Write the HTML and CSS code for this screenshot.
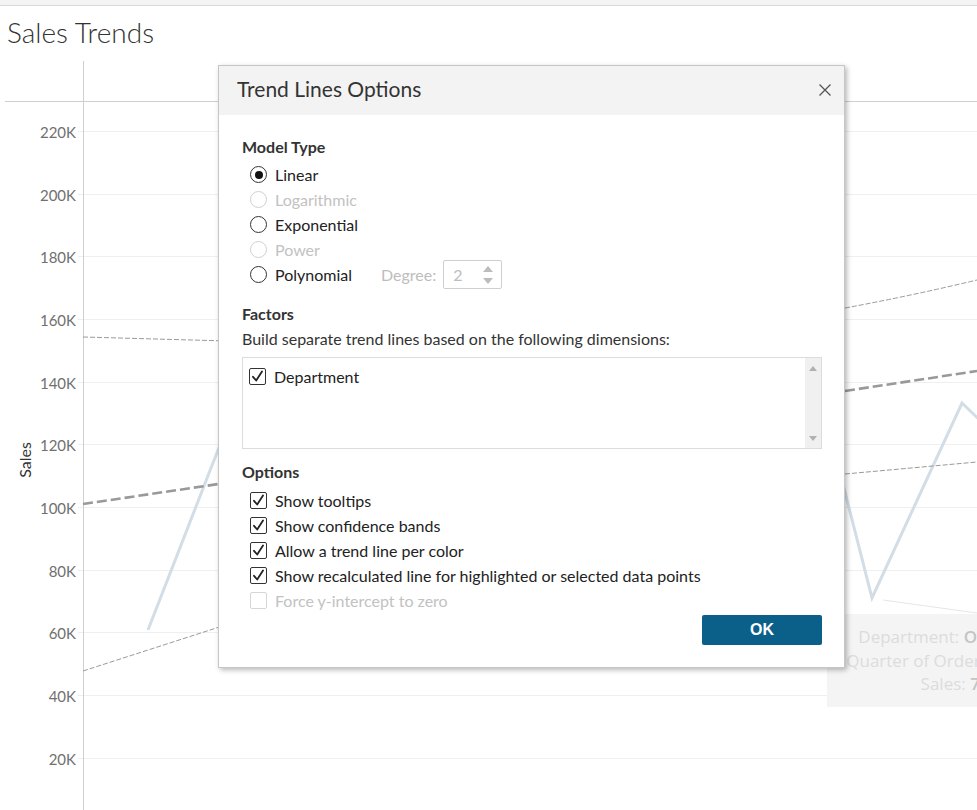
FILE: index.html
```html
<!DOCTYPE html>
<html>
<head>
<meta charset="utf-8">
<title>Sales Trends</title>
<link rel="stylesheet" href="styles.css">
</head>
<body>
<div class="page">
  <div class="topbar"></div>
  <h1 class="title">Sales Trends</h1>
  <div class="chart">
    <svg class="chart-svg" width="977" height="749" viewBox="0 61 977 749">
      <line class="sep" x1="5" y1="101.5" x2="977" y2="101.5"/>
      <g class="grid">
        <line x1="78" y1="131.5" x2="977" y2="131.5"/>
        <line x1="78" y1="194.5" x2="977" y2="194.5"/>
        <line x1="78" y1="256.5" x2="977" y2="256.5"/>
        <line x1="78" y1="319.5" x2="977" y2="319.5"/>
        <line x1="78" y1="382.5" x2="977" y2="382.5"/>
        <line x1="78" y1="444.5" x2="977" y2="444.5"/>
        <line x1="78" y1="507.5" x2="977" y2="507.5"/>
        <line x1="78" y1="570.5" x2="977" y2="570.5"/>
        <line x1="78" y1="632.5" x2="977" y2="632.5"/>
        <line x1="78" y1="695.5" x2="977" y2="695.5"/>
        <line x1="78" y1="758.5" x2="977" y2="758.5"/>
      </g>
      <line class="axis" x1="83.5" y1="61" x2="83.5" y2="810"/>
      <g class="ticks">
        <text x="76" y="132">220K</text>
        <text x="76" y="195">200K</text>
        <text x="76" y="257">180K</text>
        <text x="76" y="320">160K</text>
        <text x="76" y="383">140K</text>
        <text x="76" y="445">120K</text>
        <text x="76" y="508">100K</text>
        <text x="76" y="571">80K</text>
        <text x="76" y="633">60K</text>
        <text x="76" y="696">40K</text>
        <text x="76" y="759">20K</text>
        <text x="76" y="816">0K</text>
      </g>
      <text class="axis-title" transform="translate(24 460) rotate(-90)">Sales</text>

      <polyline class="series" points="148,630 218,450 300,260"/>
      <polyline class="series" points="820,400 845,492 872,598 962,403 990,430"/>
      <line class="faint" x1="883" y1="600" x2="977" y2="613"/>

      <line class="trend-thin" x1="83" y1="337" x2="300" y2="343"/>
      <path class="trend-thin" d="M845 308 Q910 296 977 280"/>
      <line class="trend-thick" x1="83" y1="504" x2="300" y2="472"/>
      <line class="trend-thick" x1="845" y1="391" x2="977" y2="371"/>
      <line class="trend-thin" x1="83" y1="671" x2="300" y2="601"/>
      <line class="trend-thin" x1="845" y1="474" x2="977" y2="462"/>
    </svg>
    <div class="tooltip">
      <div class="tip-inner">
        <div>Department: <b>Office Supplies</b></div>
        <div>Quarter of Order Date: <b>2013 Q2</b></div>
        <div>Sales: <b>71,208</b></div>
      </div>
    </div>
  </div>

  <div class="dialog">
    <div class="dialog-head">
      <span class="dialog-title">Trend Lines Options</span>
      <svg class="close" width="12" height="12" viewBox="0 0 12 12"><path d="M0.5 0.5 L11.5 11.5 M11.5 0.5 L0.5 11.5"/></svg>
    </div>
    <div class="dialog-body">
      <div class="section-title">Model Type</div>
      <div class="radio-list">
        <div class="row"><span class="radio checked"></span><span>Linear</span></div>
        <div class="row disabled"><span class="radio"></span><span>Logarithmic</span></div>
        <div class="row"><span class="radio"></span><span>Exponential</span></div>
        <div class="row disabled"><span class="radio"></span><span>Power</span></div>
        <div class="row">
          <span class="radio"></span><span>Polynomial</span>
          <span class="degree-label">Degree:</span>
          <span class="spin">
            <span class="spin-value">2</span>
            <span class="spin-arrows">
              <svg width="10" height="6" viewBox="0 0 10 6"><path d="M5 0 L10 6 L0 6 Z"/></svg>
              <svg width="10" height="6" viewBox="0 0 10 6"><path d="M0 0 L10 0 L5 6 Z"/></svg>
            </span>
          </span>
        </div>
      </div>

      <div class="section-title factors">Factors</div>
      <div class="desc">Build separate trend lines based on the following dimensions:</div>
      <div class="listbox">
        <div class="list-items">
          <div class="row"><span class="check on"><svg width="15" height="15" viewBox="0 0 15 15"><path d="M3 7.8 L6.2 11.5 L12 2.5"/></svg></span><span>Department</span></div>
        </div>
        <div class="scrollbar">
          <svg width="8" height="5" viewBox="0 0 8 5"><path d="M4 0 L8 5 L0 5 Z"/></svg>
          <svg width="8" height="5" viewBox="0 0 8 5"><path d="M0 0 L8 0 L4 5 Z"/></svg>
        </div>
      </div>

      <div class="section-title options">Options</div>
      <div class="check-list">
        <div class="row"><span class="check on"><svg width="15" height="15" viewBox="0 0 15 15"><path d="M3 7.8 L6.2 11.5 L12 2.5"/></svg></span><span>Show tooltips</span></div>
        <div class="row"><span class="check on"><svg width="15" height="15" viewBox="0 0 15 15"><path d="M3 7.8 L6.2 11.5 L12 2.5"/></svg></span><span>Show confidence bands</span></div>
        <div class="row"><span class="check on"><svg width="15" height="15" viewBox="0 0 15 15"><path d="M3 7.8 L6.2 11.5 L12 2.5"/></svg></span><span>Allow a trend line per color</span></div>
        <div class="row"><span class="check on"><svg width="15" height="15" viewBox="0 0 15 15"><path d="M3 7.8 L6.2 11.5 L12 2.5"/></svg></span><span>Show recalculated line for highlighted or selected data points</span></div>
        <div class="row disabled"><span class="check"></span><span>Force y-intercept to zero</span></div>
      </div>

      <div class="footer">
        <button class="ok">OK</button>
      </div>
    </div>
  </div>
</div>
</body>
</html>
```

FILE: styles.css
```css
* { box-sizing: border-box; }
html, body { margin: 0; padding: 0; background: #fff; overflow: hidden; }
body { font-family: "Lato", "Liberation Sans", sans-serif; color: #333; }

.page { position: relative; width: 977px; height: 810px; overflow: hidden; }

.topbar { height: 6px; background: #f4f4f4; border-bottom: 1px solid #dadada; }

.title {
  margin: 0;
  height: 55px;
  padding: 10px 0 0 7px;
  font-size: 28px;
  font-weight: 300;
  line-height: 1.2;
  color: #333;
}

.chart { position: relative; height: 749px; }
.chart-svg { display: block; }
.sep { stroke: #cfcfcf; stroke-width: 1; }
.axis { stroke: #cfcfcf; stroke-width: 1; }
.grid line { stroke: #efefef; stroke-width: 1; }
.ticks text { font-family: "Lato", "Liberation Sans", sans-serif; font-size: 15px; fill: #707070; text-anchor: end; dominant-baseline: central; }
.axis-title { font-family: "Lato", "Liberation Sans", sans-serif; font-size: 16px; fill: #333; text-anchor: middle; dominant-baseline: central; }
.series { fill: none; stroke: #d3dde6; stroke-width: 3; stroke-linejoin: miter; }
.faint { stroke: #e6e6e6; stroke-width: 1.2; }
.trend-thin { fill: none; stroke: #9a9a9a; stroke-width: 1; stroke-dasharray: 5 2; }
.trend-thick { fill: none; stroke: #999; stroke-width: 2.6; stroke-dasharray: 10 4; }

.tooltip {
  position: absolute;
  left: 827px;
  top: 553px;
  width: 150px;
  height: 93px;
  background: #f4f4f4;
  overflow: hidden;
}
.tip-inner {
  width: 290px;
  padding-top: 11px;
  text-align: center;
  font-family: "Open Sans", sans-serif;
  font-size: 17px;
  line-height: 23.5px;
  color: #dcdcdc;
  white-space: nowrap;
}
.tip-inner b { font-weight: 600; color: #c4c4c4; }

.dialog {
  position: absolute;
  left: 218px;
  top: 65px;
  width: 627px;
  height: 603px;
  background: #fff;
  border: 1px solid #c6c6c6;
  box-shadow: 2px 2px 5px rgba(0,0,0,0.28);
}
.dialog-head {
  height: 49px;
  background: #f3f3f3;
  display: flex;
  align-items: center;
  justify-content: space-between;
  padding: 0 13px 0 18px;
}
.dialog-title { font-size: 21px; font-weight: 400; color: #333; padding-bottom: 4px; }
.close { margin-bottom: 2px; }
.close path { stroke: #555; stroke-width: 1.3; fill: none; }

.dialog-body { padding: 20px 22px 0 23px; font-size: 16px; }
.section-title { font-weight: 700; line-height: 24px; color: #333; }
.section-title.factors { margin-top: 15px; }
.section-title.options { margin-top: 11px; }
.desc { line-height: 24px; margin-top: 1px; }

.radio-list { margin-top: 3px; }
.row { display: flex; align-items: center; height: 25px; padding-left: 8px; gap: 8px; color: #222; }
.row.disabled { color: #c2c2c2; }

.radio {
  width: 17px; height: 17px;
  border: 1.5px solid #333;
  border-radius: 50%;
  display: flex; align-items: center; justify-content: center;
  flex: none;
}
.row.disabled .radio { border-color: #d0d0d0; }
.radio.checked::after { content: ""; width: 8px; height: 8px; border-radius: 50%; background: #111; }

.degree-label { margin-left: 21px; color: #bdbdbd; }
.spin {
  margin-left: -1px;
  width: 59px; height: 29px;
  border: 1px solid #cfcfcf;
  border-radius: 2px;
  display: flex; align-items: center; justify-content: space-between;
  padding: 0 8px 0 9px;
  color: #bdbdbd;
}
.spin-arrows { display: flex; flex-direction: column; gap: 6px; }
.spin-arrows svg { display: block; }
.spin-arrows path { fill: #bcbcbc; }

.listbox {
  margin-top: 6px;
  height: 92px;
  border: 1px solid #dcdcdc;
  display: flex;
}
.list-items { flex: 1; padding-top: 6px; }
.list-items .row { padding-left: 6px; }
.scrollbar {
  width: 16px;
  background: #f0f0f0;
  display: flex; flex-direction: column; align-items: center; justify-content: space-between;
  padding: 8px 0 7px;
}
.scrollbar svg { display: block; }
.scrollbar path { fill: #b0b0b0; }

.check {
  width: 17px; height: 17px;
  border: 1.3px solid #333;
  border-radius: 2px;
  flex: none;
  display: flex; align-items: center; justify-content: center;
}
.check svg { display: block; }
.check path { fill: none; stroke: #222; stroke-width: 1.8; stroke-linecap: round; stroke-linejoin: round; }
.row.disabled .check { border-color: #d6d6d6; }

.check-list { margin-top: 4px; }

.footer { display: flex; justify-content: flex-end; margin-top: 2px; }
.ok {
  width: 120px; height: 30px;
  border: none; border-radius: 2px;
  background: #0b6089;
  color: #fff;
  font-family: "Liberation Sans", Arial, sans-serif;
  font-weight: 700;
  font-size: 16px;
  padding: 0;
}
```
